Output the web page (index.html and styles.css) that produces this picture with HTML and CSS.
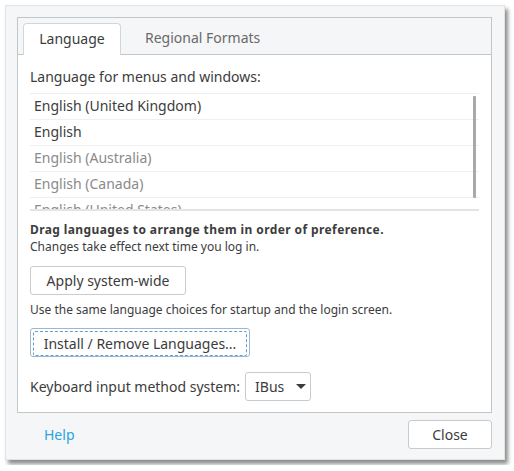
FILE: index.html
```html
<!DOCTYPE html>
<html lang="en">
<head>
  <meta charset="UTF-8">
  <title>Language Support</title>
  <link rel="stylesheet" href="styles.css">
</head>
<body>
  <div class="window">
    <div class="notebook">
      <div class="tabs">
        <div class="tab active">Language</div>
        <div class="tab">Regional Formats</div>
      </div>
      <div class="page">
        <p class="label">Language for menus and windows:</p>
        <div class="list">
          <ul>
            <li>English (United Kingdom)</li>
            <li>English</li>
            <li class="off">English (Australia)</li>
            <li class="off">English (Canada)</li>
            <li class="off">English (United States)</li>
          </ul>
          <div class="scrollbar"></div>
        </div>
        <p class="hint"><b>Drag languages to arrange them in order of preference.</b><br>Changes take effect next time you log in.</p>
        <button class="btn apply">Apply system-wide</button>
        <p class="hint note">Use the same language choices for startup and the login screen.</p>
        <button class="btn install"><span>Install / Remove Languages...</span></button>
        <div class="keyboard">
          <span>Keyboard input method system:</span>
          <button class="btn combo">IBus <span class="arrow"></span></button>
        </div>
      </div>
    </div>
    <div class="footer">
      <a class="help" href="#">Help</a>
      <button class="btn close">Close</button>
    </div>
  </div>
</body>
</html>
```

FILE: styles.css
```css
body {
  margin: 0;
  background: #fff;
  font-family: "Noto Sans", "DejaVu Sans", sans-serif;
  font-size: 14px;
  color: #3c3c3c;
}

.window {
  margin: 5px;
  width: 500px;
  height: 455px;
  box-sizing: border-box;
  background: #f5f6f7;
  border: 1px solid #e2e3e4;
  box-shadow: 3px 4px 4px rgba(0, 0, 0, 0.45);
  padding: 11px 12px 0 11px;
}

.notebook {
  border: 1px solid #c3c6c9;
  background: #fff;
}

.tabs {
  display: flex;
  background: #f5f6f7;
  padding: 5px 0 0 5px;
  border-bottom: 1px solid #c3c6c9;
  height: 31px;
}

.tab {
  height: 32px;
  line-height: 29px;
  box-sizing: border-box;
  padding: 0 22px 0 20px;
  color: #6a6a6a;
}

.tab.active {
  background: #fff;
  border: 1px solid #d3d6d9;
  border-bottom: none;
  border-radius: 4px 4px 0 0;
  color: #3c3c3c;
  width: 98px;
  padding: 0;
  text-align: center;
  margin-right: 4px;
}

.page {
  padding: 12px 12px 11px 12px;
}

.label {
  margin: 0 0 6px;
  line-height: 20px;
}

.list {
  position: relative;
  border-top: 1px solid #eeeeee;
  border-bottom: 2px solid #e3e4e5;
  height: 115px;
  overflow: hidden;
}

.list ul {
  list-style: none;
  margin: 0;
  padding: 0;
}

.list li {
  height: 26px;
  line-height: 24px;
  border-bottom: 1px solid #efefef;
  box-sizing: border-box;
  padding-left: 4px;
}

.list li.off {
  color: #8a8a8a;
}

.scrollbar {
  position: absolute;
  right: 3px;
  top: 2px;
  width: 3px;
  height: 102px;
  background: #a9a9a9;
  border-radius: 1px;
}

.hint {
  font-size: 12px;
  line-height: 17px;
  margin: 10px 0 0;
}

.hint b {
  font-weight: bold;
  letter-spacing: 0.4px;
}

.btn {
  font-family: inherit;
  font-size: 14px;
  color: #3c3c3c;
  background: #fff;
  border: 1px solid #c8cbce;
  border-radius: 3px;
  height: 29px;
  padding: 0;
}

.apply {
  display: block;
  margin-top: 11px;
  width: 156px;
}

.note {
  margin-top: 6px;
}

.install {
  display: block;
  margin-top: 10px;
  width: 220px;
  border-color: #9fb6cc;
  padding: 2px;
}

.install span {
  display: block;
  height: 100%;
  line-height: 23px;
  border: 1px dashed #5f9ed6;
  border-radius: 2px;
}

.keyboard {
  display: flex;
  align-items: center;
  margin-top: 15px;
}

.combo {
  margin-left: 5px;
  width: 66px;
  display: flex;
  align-items: center;
  padding-left: 9px;
}

.arrow {
  margin-left: 12px;
  border-left: 5px solid transparent;
  border-right: 5px solid transparent;
  border-top: 5px solid #3c3c3c;
}

.footer {
  display: flex;
  justify-content: space-between;
  align-items: center;
  padding: 7px 0 0 27px;
}

.help {
  color: #2aa4dd;
  text-decoration: none;
}

.close {
  width: 84px;
}
```
